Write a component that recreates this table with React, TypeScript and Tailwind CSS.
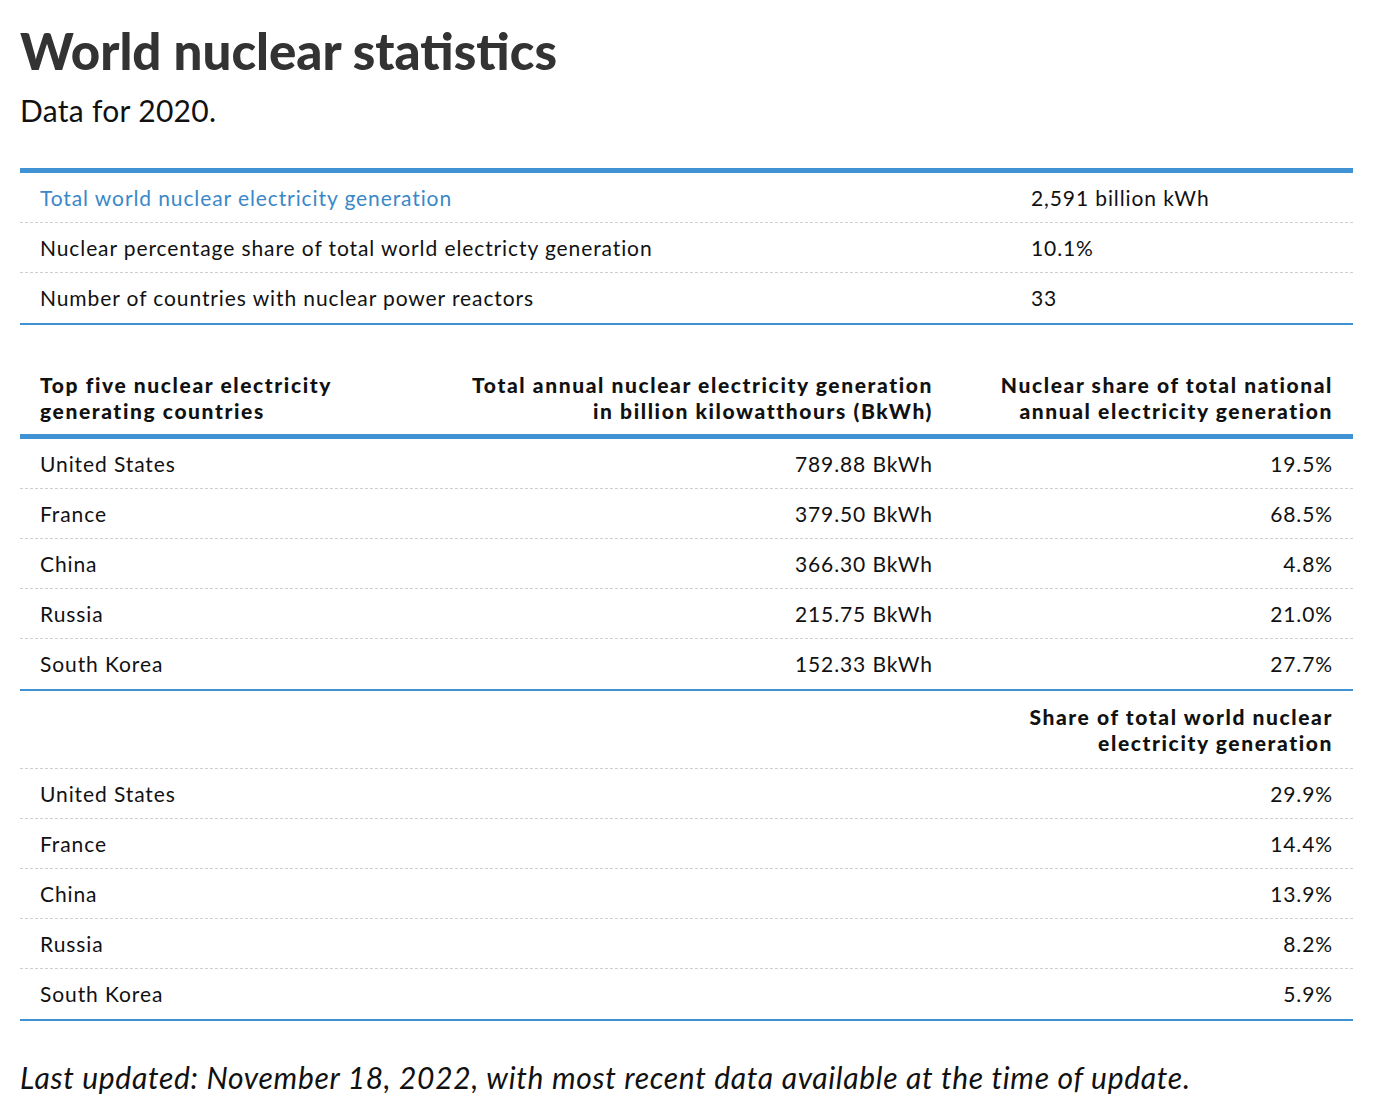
import React from "react";

const top5 = [
  ["United States", "789.88 BkWh", "19.5%"],
  ["France", "379.50 BkWh", "68.5%"],
  ["China", "366.30 BkWh", "4.8%"],
  ["Russia", "215.75 BkWh", "21.0%"],
  ["South Korea", "152.33 BkWh", "27.7%"],
];

const share = [
  ["United States", "29.9%"],
  ["France", "14.4%"],
  ["China", "13.9%"],
  ["Russia", "8.2%"],
  ["South Korea", "5.9%"],
];

export default function App() {
  return (
    <div
      className="min-h-[1116px] bg-white px-[20px] pt-[20px] text-[#111]"
      style={{ fontFamily: "Lato, 'Noto Sans', sans-serif" }}
    >
      <h1 className="text-[51px] font-black leading-[62px] text-[#333]">
        World nuclear statistics
      </h1>
      <p className="mt-[10px] text-[30px] leading-[36px] tracking-[0.3px]">Data for 2020.</p>

      <div className="mt-[40px] w-[1333px] border-t-[5px] border-b-2 border-[#4092d2] text-[21px] tracking-[0.9px]">
        {[
          ["Total world nuclear electricity generation", "2,591 billion kWh", true],
          ["Nuclear percentage share of total world electricty generation", "10.1%", false],
          ["Number of countries with nuclear power reactors", "33", false],
        ].map(([a, b, link], i) => (
          <div
            key={i}
            className={`flex h-[50px] items-center ${i < 2 ? "border-b border-dashed border-[#cfcfcf]" : ""}`}
          >
            <div className={`w-[991px] pl-[20px] ${link ? "text-[#3a88c8]" : ""}`}>{a}</div>
            <div className="pl-[20px]">{b}</div>
          </div>
        ))}
      </div>

      <div className="mt-[47px] w-[1333px] text-[21px] tracking-[0.9px]">
        <div className="flex border-b-[5px] border-[#4092d2] pb-[10px] font-black leading-[26px] tracking-[1.6px] whitespace-nowrap">
          <div className="w-[433px] pl-[20px]">
            Top five nuclear electricity
            <br />
            generating countries
          </div>
          <div className="w-[500px] pr-[20px] text-right">
            Total annual nuclear electricity generation
            <br />
            in billion kilowatthours (BkWh)
          </div>
          <div className="w-[400px] pr-[20px] text-right">
            Nuclear share of total national
            <br />
            annual electricity generation
          </div>
        </div>
        {top5.map((r, i) => (
          <div
            key={i}
            className={`flex h-[50px] items-center ${i < 4 ? "border-b border-dashed border-[#cfcfcf]" : ""}`}
          >
            <div className="w-[433px] pl-[20px]">{r[0]}</div>
            <div className="w-[500px] pr-[20px] text-right">{r[1]}</div>
            <div className="w-[400px] pr-[20px] text-right">{r[2]}</div>
          </div>
        ))}
        <div className="border-t-2 border-[#4092d2]">
          <div className="flex justify-end border-b border-dashed border-[#cfcfcf] pb-[12px] pt-[13px] pr-[20px] text-right font-black leading-[26px] tracking-[1.6px]">
            <div>
              Share of total world nuclear
              <br />
              electricity generation
            </div>
          </div>
          {share.map((r, i) => (
            <div
              key={i}
              className={`flex h-[50px] items-center ${i < 4 ? "border-b border-dashed border-[#cfcfcf]" : ""}`}
            >
              <div className="flex-1 pl-[20px]">{r[0]}</div>
              <div className="w-[400px] pr-[20px] text-right">{r[1]}</div>
            </div>
          ))}
        </div>
        <div className="border-t-2 border-[#4092d2]" />
      </div>

      <p className="mt-[38px] text-[30px] italic leading-[36px] tracking-[0.7px]">
        Last updated: November 18, 2022, with most recent data available at the time of update.
      </p>
    </div>
  );
}
